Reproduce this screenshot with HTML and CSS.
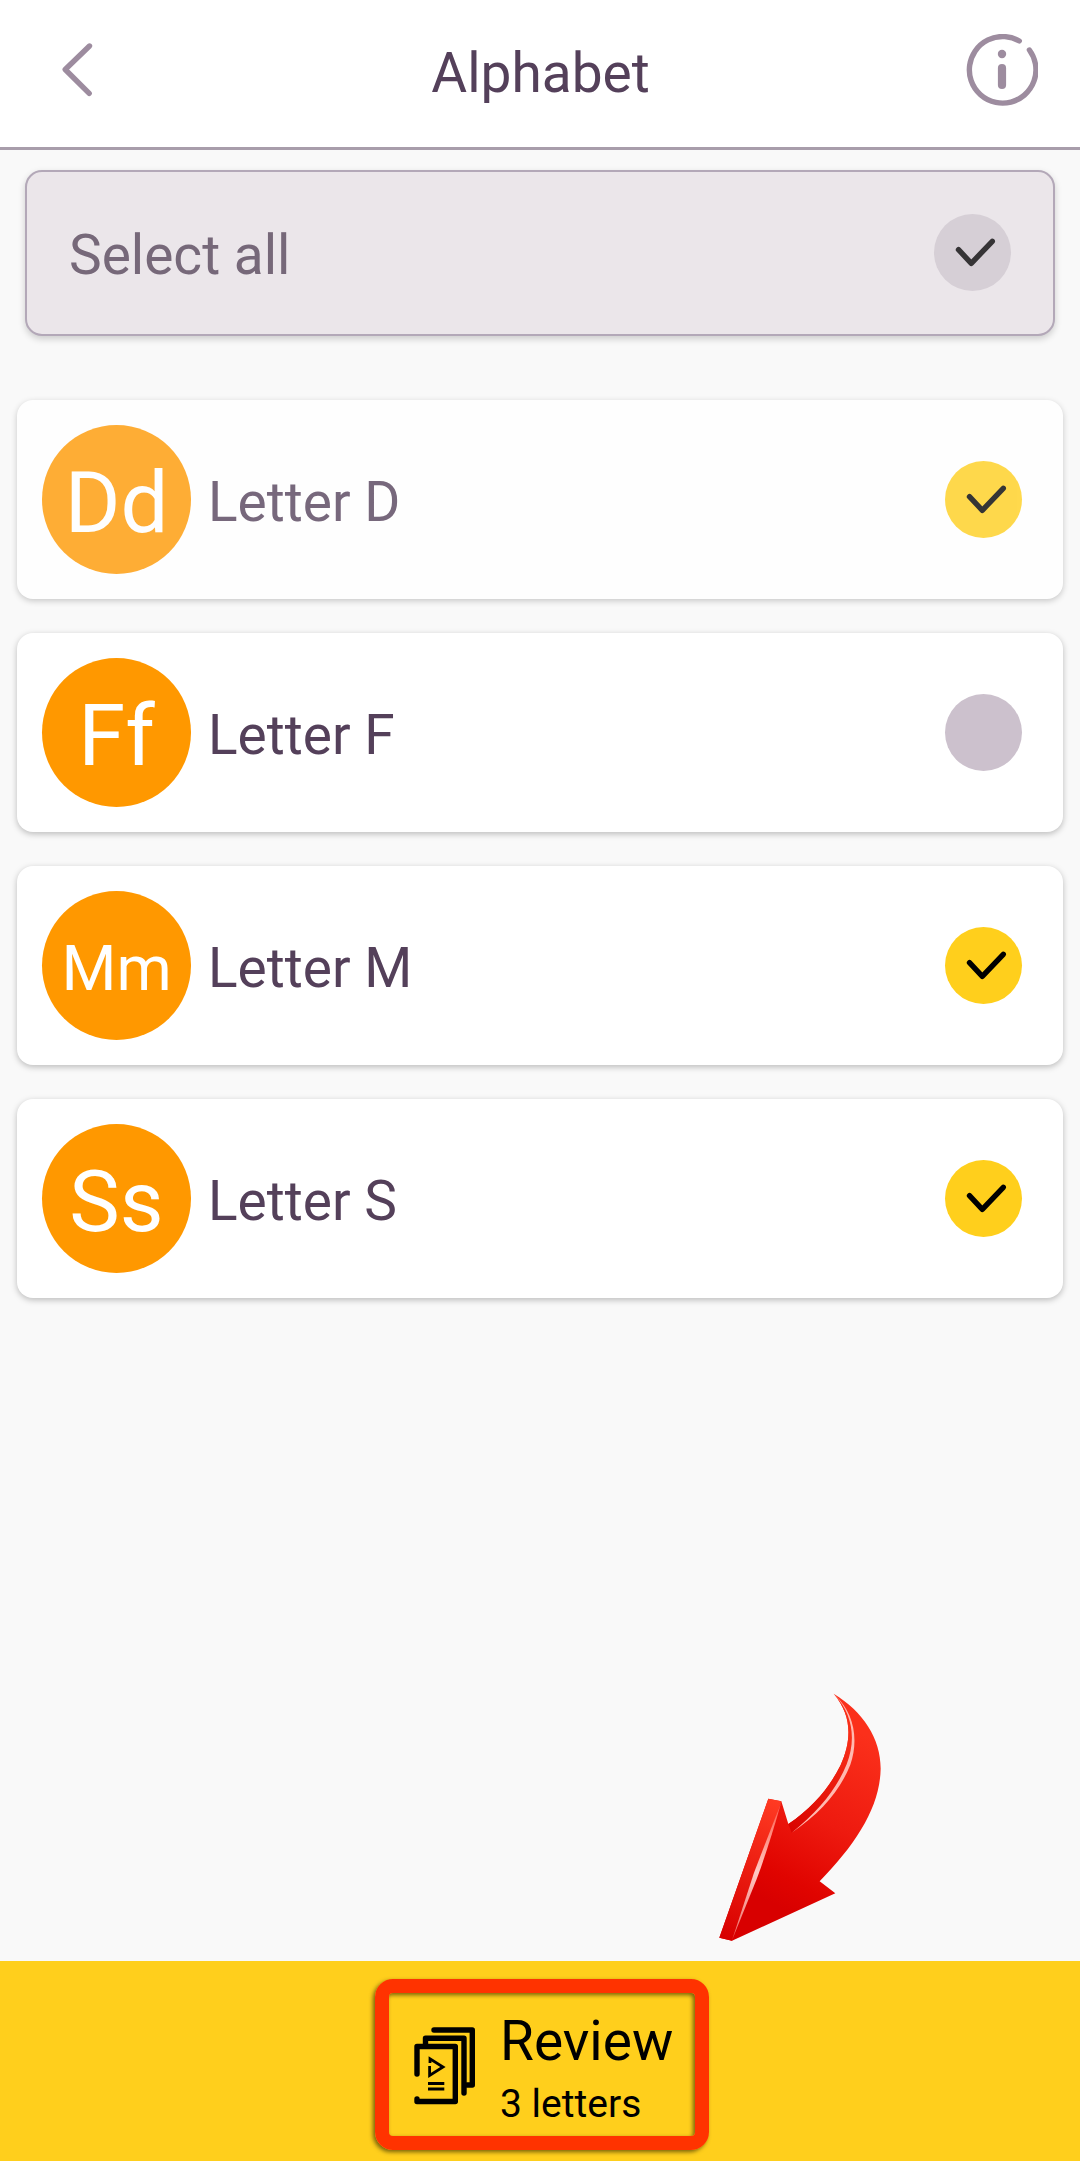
FILE: index.html
```html
<!DOCTYPE html>
<html lang="en">
<head>
    <meta charset="UTF-8">
    <meta name="viewport" content="width=device-width, initial-scale=1.0">
    <title>Alphabet</title>
    <link rel="stylesheet" href="styles.css">
</head>
<body>
    <svg class="sprite" width="0" height="0">
        <symbol id="check" viewBox="0 0 77 77">
            <path d="M24.5 35.7L37.3 49.3L58.3 27.3" fill="none" stroke="currentColor" stroke-width="5.4" stroke-linecap="round" stroke-linejoin="round"/>
        </symbol>
    </svg>

    <div class="screen">
        <header class="topbar">
            <svg class="back" viewBox="0 0 44 60" width="44" height="60">
                <path d="M29.5 6L5.2 29.5L29.2 53.3" fill="none" stroke="currentColor" stroke-width="5.4" stroke-linecap="round" stroke-linejoin="round"/>
            </svg>
            <h1>Alphabet</h1>
            <svg class="info" viewBox="0 0 72 72" width="72" height="72">
                <path d="M53.3 7A33.3 33.3 0 1 0 63.4 16" fill="none" stroke="currentColor" stroke-width="5.4" stroke-linecap="round"/>
                <circle cx="36" cy="20" r="4.2" fill="currentColor"/>
                <path d="M36 34V51" stroke="currentColor" stroke-width="8.2" stroke-linecap="round"/>
            </svg>
        </header>

        <main class="content">
            <!-- Select all -->
            <div class="select-all">
                <span class="label">Select all</span>
                <svg class="tick"><use href="#check"/></svg>
            </div>

            <!-- Letters -->
            <div class="letter-list">
                <div class="letter pressed">
                    <div class="avatar"><span>Dd</span></div>
                    <span class="label">Letter D</span>
                    <svg class="tick on"><use href="#check"/></svg>
                </div>
                <div class="letter">
                    <div class="avatar"><span>Ff</span></div>
                    <span class="label">Letter F</span>
                    <svg class="tick"></svg>
                </div>
                <div class="letter">
                    <div class="avatar small"><span>Mm</span></div>
                    <span class="label">Letter M</span>
                    <svg class="tick on"><use href="#check"/></svg>
                </div>
                <div class="letter">
                    <div class="avatar"><span>Ss</span></div>
                    <span class="label">Letter S</span>
                    <svg class="tick on"><use href="#check"/></svg>
                </div>
            </div>

            <!-- Arrow pointing at the review button -->
            <svg class="arrow" viewBox="0 0 660 870" width="220" height="290">
                <defs>
                    <linearGradient id="body" gradientUnits="userSpaceOnUse" x1="500" y1="180" x2="230" y2="690">
                        <stop offset="0" stop-color="#fb301b"/>
                        <stop offset="0.5" stop-color="#ee1a0f"/>
                        <stop offset="0.85" stop-color="#e00400"/>
                        <stop offset="1" stop-color="#d80000"/>
                    </linearGradient>
                    <linearGradient id="edge" gradientUnits="userSpaceOnUse" x1="250" y1="390" x2="105" y2="800">
                        <stop offset="0" stop-color="#ff3a22"/>
                        <stop offset="1" stop-color="#d80000"/>
                    </linearGradient>
                    <linearGradient id="rim" gradientUnits="userSpaceOnUse" x1="470" y1="200" x2="300" y2="480">
                        <stop offset="0" stop-color="#f82e18"/>
                        <stop offset="1" stop-color="#d90400"/>
                    </linearGradient>
                    <linearGradient id="shine" gradientUnits="userSpaceOnUse" x1="272" y1="400" x2="126" y2="810">
                        <stop offset="0" stop-color="#ff5a48"/>
                        <stop offset="0.5" stop-color="#ffc9c4"/>
                        <stop offset="1" stop-color="#ee6a64"/>
                    </linearGradient>
                </defs>
                <path d="M431 71C520 125 572 205 572 296C570 410 500 520 389 634L436 670L126 812L88 803L235 386L274 394L295 462C370 412 420 350 452 285C486 210 486 135 431 71Z" fill="url(#body)"/>
                <path d="M431 71C486 135 486 210 452 285C420 350 370 412 295 462L305 488C395 420 450 355 478 288C505 205 490 135 431 71Z" fill="url(#rim)"/>
                <path d="M88 803L235 386L274 394L126 812Z" fill="url(#edge)"/>
                <path d="M436 76C490 128 508 205 481 284C451 360 396 426 305 488C388 422 440 356 470 283C500 205 486 132 436 76Z" fill="#ffb9b0"/>
                <path d="M274 396Q240 518 201 625L126 811L192 608Z" fill="url(#shine)"/>
            </svg>
        </main>

        <footer class="bottombar">
            <button class="review">
                <svg class="cards" viewBox="0 0 62 78" width="62" height="78">
                    <g fill="none" stroke="#000" stroke-width="5.4" stroke-linecap="round" stroke-linejoin="round">
                        <path d="M3 47V19.5H41.3V74.5H3V72"/>
                        <path d="M11.5 17V11.2H50V66"/>
                        <path d="M20 3H58.3V58H53"/>
                    </g>
                    <g fill="none" stroke="#000" stroke-width="2.8">
                        <path d="M15.6 39V48.5L29 40L16 31.8V36"/>
                        <path d="M14 56.5H30.3M14 62H30.3"/>
                    </g>
                </svg>
                <span class="review-text">
                    <span class="title">Review</span>
                    <span class="count">3 letters</span>
                </span>
            </button>
        </footer>
    </div>
</body>
</html>
```
FILE: styles.css
```css
* {
    box-sizing: border-box;
}

body {
    margin: 0;
    font-family: Roboto, sans-serif;
    font-size: 55px;
    line-height: 64px;
    color: #54405a;
    background-color: #f9f9f9;
}

.sprite {
    display: none;
}

.screen {
    display: flex;
    flex-direction: column;
    height: 2161px;
}

/* Header */
.topbar {
    display: flex;
    align-items: center;
    justify-content: space-between;
    height: 150px;
    padding: 0 42px 8px 60px;
    background-color: #ffffff;
    border-bottom: 3px solid #a89dab;
}

.topbar h1 {
    margin: 7px 0 0 11px;
    font-size: 55px;
    font-weight: 400;
}

.back, .info {
    color: #9d8c9f;
}

.content {
    position: relative;
    flex: 1;
    padding: 20px 17px 0;
}

.label {
    flex: 1;
    padding-top: 5px;
}

.tick {
    width: 77px;
    height: 77px;
    border-radius: 50%;
    background-color: #ccc1cd;
    color: #000000;
}

.tick.on {
    background-color: #ffcf1c;
}

.select-all {
    display: flex;
    align-items: center;
    height: 166px;
    margin: 0 8px 64px;
    padding: 0 42px 2px 42px;
    background-color: #ebe6ea;
    border: 2px solid #b3a8b8;
    border-radius: 17px;
    box-shadow: 0 3px 7px rgba(0, 0, 0, 0.18);
}

.select-all .label {
    color: #766879;
}

.select-all .tick {
    background-color: #d6cfd6;
    color: #363436;
}

/* Letter cards */
.letter-list {
    display: flex;
    flex-direction: column;
    gap: 34px;
}

.letter {
    display: flex;
    align-items: center;
    height: 199px;
    padding: 0 41px 0 25px;
    background-color: #ffffff;
    border-radius: 16px;
    box-shadow: 0 2px 6px rgba(0, 0, 0, 0.25);
}

.letter.pressed {
    background-color: #fefefe;
    box-shadow: 0 2px 6px rgba(0, 0, 0, 0.2);
}

.letter.pressed > * {
    opacity: 0.79;
}

.avatar {
    display: flex;
    align-items: center;
    justify-content: center;
    width: 149px;
    height: 149px;
    margin-right: 17px;
    padding-top: 6px;
    border-radius: 50%;
    background-color: #ff9800;
    color: #ffffff;
    font-size: 85px;
}

.avatar.small {
    font-size: 63px;
}

.arrow {
    position: absolute;
    left: 690px;
    bottom: 1px;
}

/* Footer */
.bottombar {
    display: flex;
    align-items: center;
    justify-content: center;
    height: 200px;
    padding: 6px 0 0 4px;
    background-color: #ffcf1c;
}

.review {
    display: flex;
    align-items: center;
    width: 334px;
    height: 171px;
    padding: 0 0 0 25px;
    font-family: inherit;
    text-align: left;
    color: #000000;
    background: none;
    border: 14px solid #ff3300;
    border-radius: 18px;
    box-shadow: -2px 2px 4px rgba(60, 50, 0, 0.7), inset -2px 2px 4px rgba(60, 50, 0, 0.7);
}

.cards {
    margin-top: 3px;
}

.review-text {
    display: flex;
    flex-direction: column;
    margin: 16px 0 0 24px;
}

.title {
    font-size: 55px;
    line-height: 64px;
}

.count {
    font-size: 39px;
    line-height: 62px;
}
```
